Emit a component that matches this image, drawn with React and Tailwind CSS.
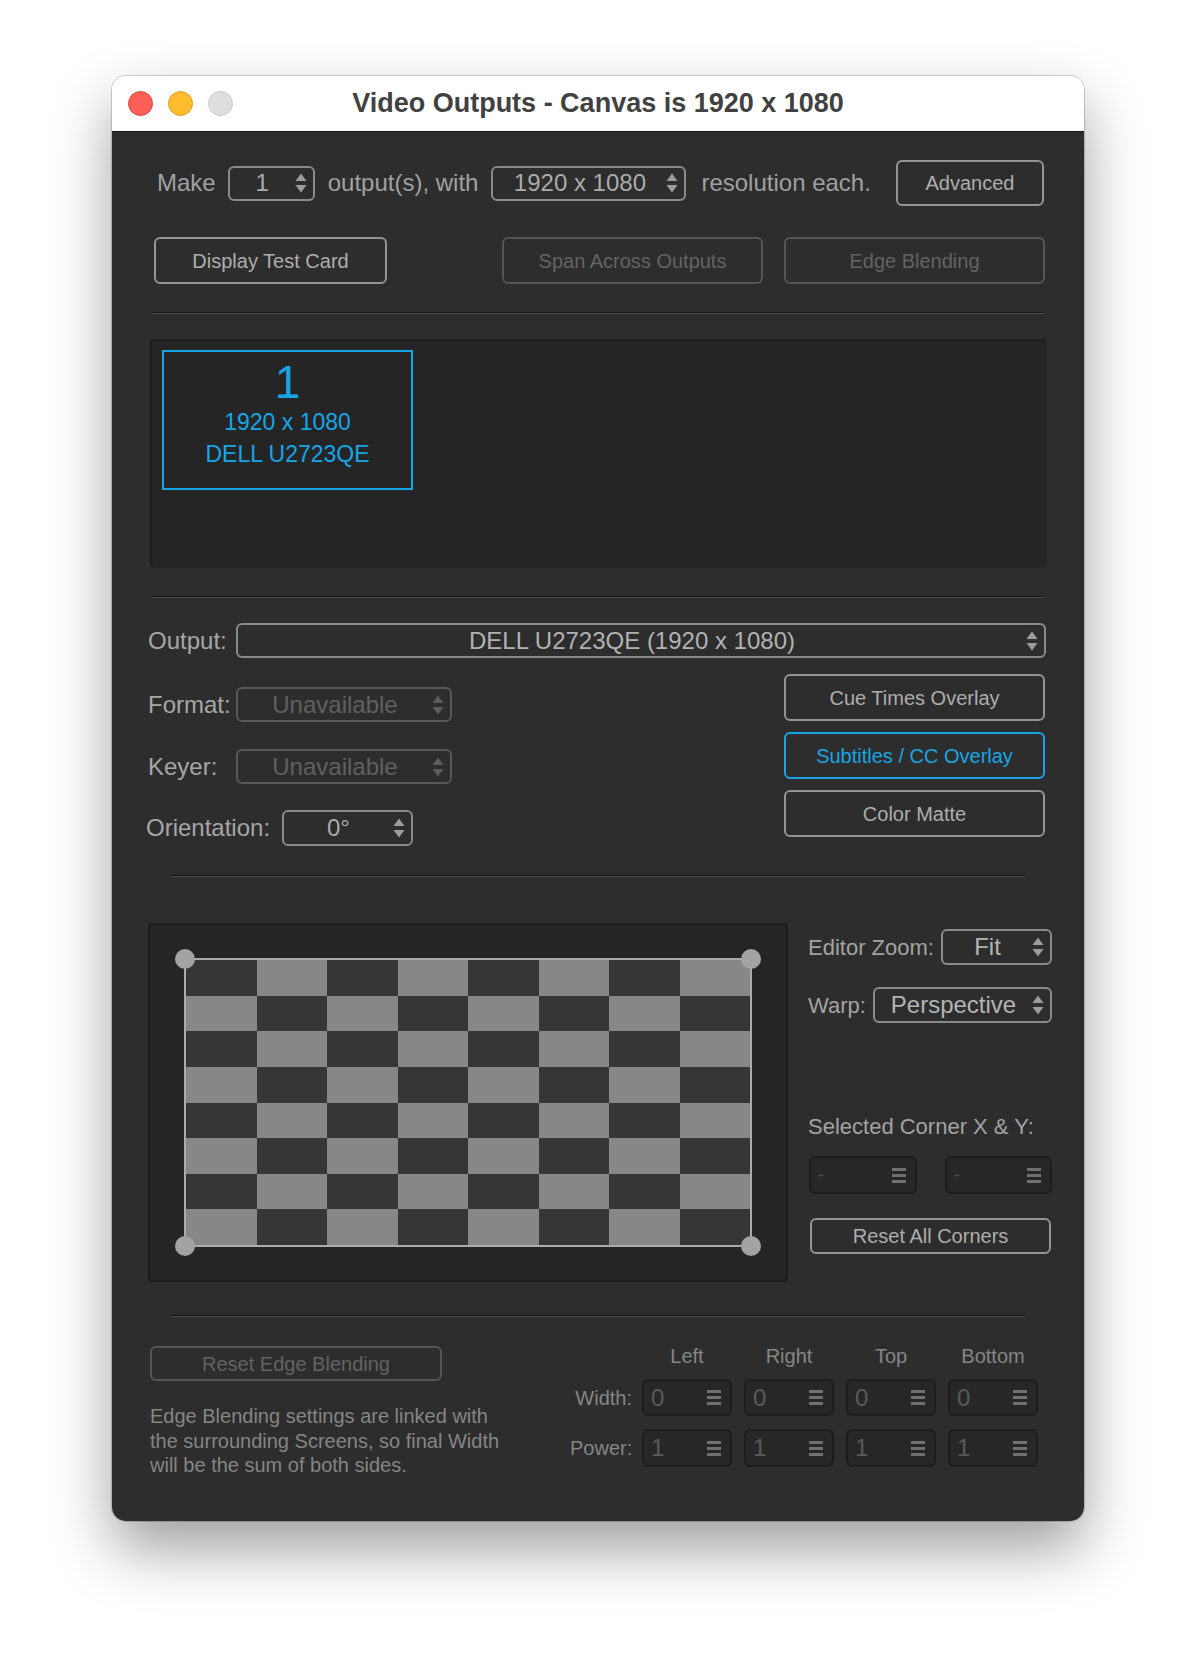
import React from 'react';

function UpDown({ className = '' }) {
  return (
    <svg viewBox="0 0 12 22" className={`shrink-0 w-[12px] h-[22px] ${className}`} fill="currentColor">
      <path d="M6 1.5 11.5 9H.5Z" />
      <path d="M6 20.5.5 13h11Z" />
    </svg>
  );
}

function Select({ value, className = '', disabled = false, textClass = '' }) {
  const tone = disabled ? 'border-[#585858] text-[#606060]' : 'border-[#8a8a8a] text-[#ababab]';
  return (
    <div className={`flex items-center h-[35px] rounded-[6px] border-2 ${tone} ${className}`}>
      <span className={`flex-1 text-center text-[24px] leading-none ${textClass}`}>{value}</span>
      <UpDown className={`mr-[6px] ${disabled ? 'text-[#5c5c5c]' : 'text-[#9c9c9c]'}`} />
    </div>
  );
}

function Button({ children, className = '', variant = 'normal' }) {
  const tone = {
    normal: 'border-[#949494] text-[#adadad]',
    disabled: 'border-[#555555] text-[#636363]',
    blue: 'border-[#17a5e6] text-[#17a5e6]',
  }[variant];
  return (
    <div className={`flex items-center justify-center rounded-[6px] border-2 text-[20px] leading-none ${tone} ${className}`}>
      {children}
    </div>
  );
}

function Bars() {
  return (
    <div className="flex flex-col gap-[3px]">
      <div className="w-[14px] h-[3px] bg-[#707070]" />
      <div className="w-[14px] h-[3px] bg-[#707070]" />
      <div className="w-[14px] h-[3px] bg-[#707070]" />
    </div>
  );
}

function Field({ value, className = '', textClass = 'text-[24px] text-[#5a5a5a]' }) {
  return (
    <div className={`flex items-center justify-between rounded-[6px] border-2 border-[#1d1d1d] bg-[#272727] pl-[7px] pr-[9px] ${className}`}>
      <span className={`leading-none ${textClass}`}>{value}</span>
      <Bars />
    </div>
  );
}

function Sep({ className = '' }) {
  return <div className={`h-[2px] border-t border-b border-t-[#161616] border-b-[#4e4e4e] ${className}`} />;
}

function Checkerboard() {
  const cells = [];
  for (let r = 0; r < 8; r++) {
    for (let c = 0; c < 8; c++) {
      const dark = (r + c) % 2 === 0;
      cells.push(<div key={`${r}-${c}`} className={dark ? 'bg-[#363636]' : 'bg-[#878787]'} />);
    }
  }
  return (
    <div className="relative w-[568px] h-[289px] border-2 border-[#ababab]">
      <div className="grid grid-cols-8 grid-rows-8 w-full h-full">{cells}</div>
      <div className="absolute -top-[11px] -left-[11px] w-[20px] h-[20px] rounded-full bg-[#a3a3a3]" />
      <div className="absolute -top-[11px] -right-[11px] w-[20px] h-[20px] rounded-full bg-[#a3a3a3]" />
      <div className="absolute -bottom-[11px] -left-[11px] w-[20px] h-[20px] rounded-full bg-[#a3a3a3]" />
      <div className="absolute -bottom-[11px] -right-[11px] w-[20px] h-[20px] rounded-full bg-[#a3a3a3]" />
    </div>
  );
}

export default function App() {
  const sides = ['Left', 'Right', 'Top', 'Bottom'];

  return (
    <div className="min-h-[1668px] bg-white pt-[76px] font-['Liberation_Sans',Arial,sans-serif]">
      <div className="mx-auto w-[972px] rounded-[14px] overflow-hidden shadow-[0_28px_60px_rgba(0,0,0,0.38),0_0_0_1px_rgba(0,0,0,0.18)]">
        {/* Title bar */}
        <div className="grid grid-cols-[1fr_auto_1fr] items-center h-[56px] bg-white border-b border-[#151515]">
          <div className="flex items-center gap-[15px] pl-[16px]">
            <div className="w-[25px] h-[25px] rounded-full bg-[#fe5f57] border border-[#e2463f]" />
            <div className="w-[25px] h-[25px] rounded-full bg-[#febc2e] border border-[#dfa023]" />
            <div className="w-[25px] h-[25px] rounded-full bg-[#dedede] border border-[#cacaca]" />
          </div>
          <div className="text-[27px] font-bold text-[#414141]">Video Outputs - Canvas is 1920 x 1080</div>
          <div />
        </div>

        {/* Body */}
        <div className="h-[1389px] bg-[#2d2d2d] px-[36px] pt-[28px]">
          {/* Make row */}
          <div className="flex items-center h-[46px] text-[24px] text-[#a0a0a0]">
            <span className="ml-[9px]">Make</span>
            <Select value="1" className="ml-[12px] w-[87px]" />
            <span className="ml-[13px]">output(s), with</span>
            <Select value="1920 x 1080" className="ml-[13px] w-[195px]" />
            <span className="ml-[15px]">resolution each.</span>
            <Button className="ml-auto mr-[4px] w-[148px] h-[46px]">Advanced</Button>
          </div>

          <div className="mt-[31px] flex h-[47px]">
            <Button className="ml-[6px] w-[233px]">Display Test Card</Button>
            <Button variant="disabled" className="ml-auto w-[261px]">Span Across Outputs</Button>
            <Button variant="disabled" className="ml-[21px] mr-[3px] w-[261px]">Edge Blending</Button>
          </div>

          <Sep className="mt-[28px] mx-[4px]" />

          {/* Outputs map */}
          <div className="mt-[25px] ml-[2px] w-[897px] h-[229px] rounded-[4px] bg-[#252525] border-t-2 border-l-2 border-[#1d1d1d] pt-[9px] pl-[10px]">
            <div className="w-[251px] h-[140px] border-2 border-[#16a6e8] text-[#16a6e8] flex flex-col items-center pt-[6px]">
              <div className="text-[46px] leading-[48px]">1</div>
              <div className="text-[23px] leading-[32px]">1920 x 1080</div>
              <div className="text-[23px] leading-[32px]">DELL U2723QE</div>
            </div>
          </div>

          <Sep className="mt-[28px] mx-[4px]" />

          {/* Output settings */}
          <div className="mt-[25px] flex items-center h-[35px]">
            <span className="w-[88px] text-[24px] text-[#a6a6a6]">Output:</span>
            <Select value="DELL U2723QE (1920 x 1080)" className="flex-1 mr-[2px]" textClass="text-[#b2b2b2]" />
          </div>

          <div className="mt-[16px] flex">
            <div className="flex flex-col pt-[13px]">
              <div className="flex items-center h-[35px]">
                <span className="w-[88px] text-[24px] text-[#a6a6a6]">Format:</span>
                <Select value="Unavailable" disabled className="w-[216px]" />
              </div>
              <div className="mt-[27px] flex items-center h-[35px]">
                <span className="w-[88px] text-[24px] text-[#a6a6a6]">Keyer:</span>
                <Select value="Unavailable" disabled className="w-[216px]" />
              </div>
              <div className="mt-[26px] flex items-center h-[36px]">
                <span className="-ml-[2px] w-[136px] text-[24px] text-[#a6a6a6]">Orientation:</span>
                <Select value="0°" className="w-[131px] h-[36px]" />
              </div>
            </div>
            <div className="ml-auto mr-[3px] w-[261px] flex flex-col gap-[11px]">
              <Button className="h-[47px]">Cue Times Overlay</Button>
              <Button variant="blue" className="h-[47px]">Subtitles / CC Overlay</Button>
              <Button className="h-[47px]">Color Matte</Button>
            </div>
          </div>

          <Sep className="mt-[29px] mx-[23px]" />

          {/* Warp editor */}
          <div className="mt-[46px] flex">
            <div className="shrink-0 w-[640px] h-[359px] rounded-[4px] bg-[#252525] border-2 border-[#1d1d1d] pt-[33px] pl-[34px]">
              <Checkerboard />
            </div>
            <div className="shrink-0 ml-[20px] w-[244px] flex flex-col text-[22px] text-[#a3a3a3]">
              <div className="mt-[6px] flex items-center h-[36px]">
                <span>Editor Zoom:</span>
                <Select value="Fit" className="ml-auto w-[111px] h-[36px]" textClass="text-[#b4b4b4]" />
              </div>
              <div className="mt-[22px] flex items-center h-[36px]">
                <span>Warp:</span>
                <Select value="Perspective" className="ml-auto w-[179px] h-[36px]" textClass="text-[#b4b4b4]" />
              </div>
              <div className="mt-[90px] leading-[28px]">Selected Corner X &amp; Y:</div>
              <div className="mt-[15px] flex">
                <Field value="-" className="ml-[1px] w-[108px] h-[38px]" textClass="text-[18px] text-[#555555]" />
                <Field value="-" className="ml-auto w-[107px] h-[38px]" textClass="text-[18px] text-[#555555]" />
              </div>
              <Button className="mt-[24px] ml-[2px] w-[241px] h-[36px]">Reset All Corners</Button>
            </div>
          </div>

          <Sep className="mt-[33px] mx-[23px]" />

          {/* Edge blending */}
          <div className="mt-[29px] flex">
            <div className="flex flex-col">
              <Button variant="disabled" className="ml-[2px] w-[292px] h-[35px]">Reset Edge Blending</Button>
              <p className="mt-[23px] ml-[2px] text-[20px] leading-[24.5px] text-[#858585] whitespace-nowrap">
                Edge Blending settings are linked with
                <br />
                the surrounding Screens, so final Width
                <br />
                will be the sum of both sides.
              </p>
            </div>
            <div className="ml-auto mr-[10px] -mt-[2px] flex flex-col text-[20px] text-[#858585]">
              <div className="flex h-[24px] items-center">
                <div className="w-[62px]" />
                {sides.map((s, i) => (
                  <div key={s} className={`w-[90px] text-center ${i === 0 ? 'ml-[10px]' : 'ml-[12px]'}`}>{s}</div>
                ))}
              </div>
              <div className="mt-[11px] flex items-center">
                <div className="w-[62px] text-right">Width:</div>
                {sides.map((s, i) => (
                  <Field key={s} value="0" className={`w-[90px] h-[37px] ${i === 0 ? 'ml-[10px]' : 'ml-[12px]'}`} />
                ))}
              </div>
              <div className="mt-[13px] flex items-center">
                <div className="w-[62px] text-right">Power:</div>
                {sides.map((s, i) => (
                  <Field key={s} value="1" className={`w-[90px] h-[38px] ${i === 0 ? 'ml-[10px]' : 'ml-[12px]'}`} />
                ))}
              </div>
            </div>
          </div>
        </div>
      </div>
    </div>
  );
}
